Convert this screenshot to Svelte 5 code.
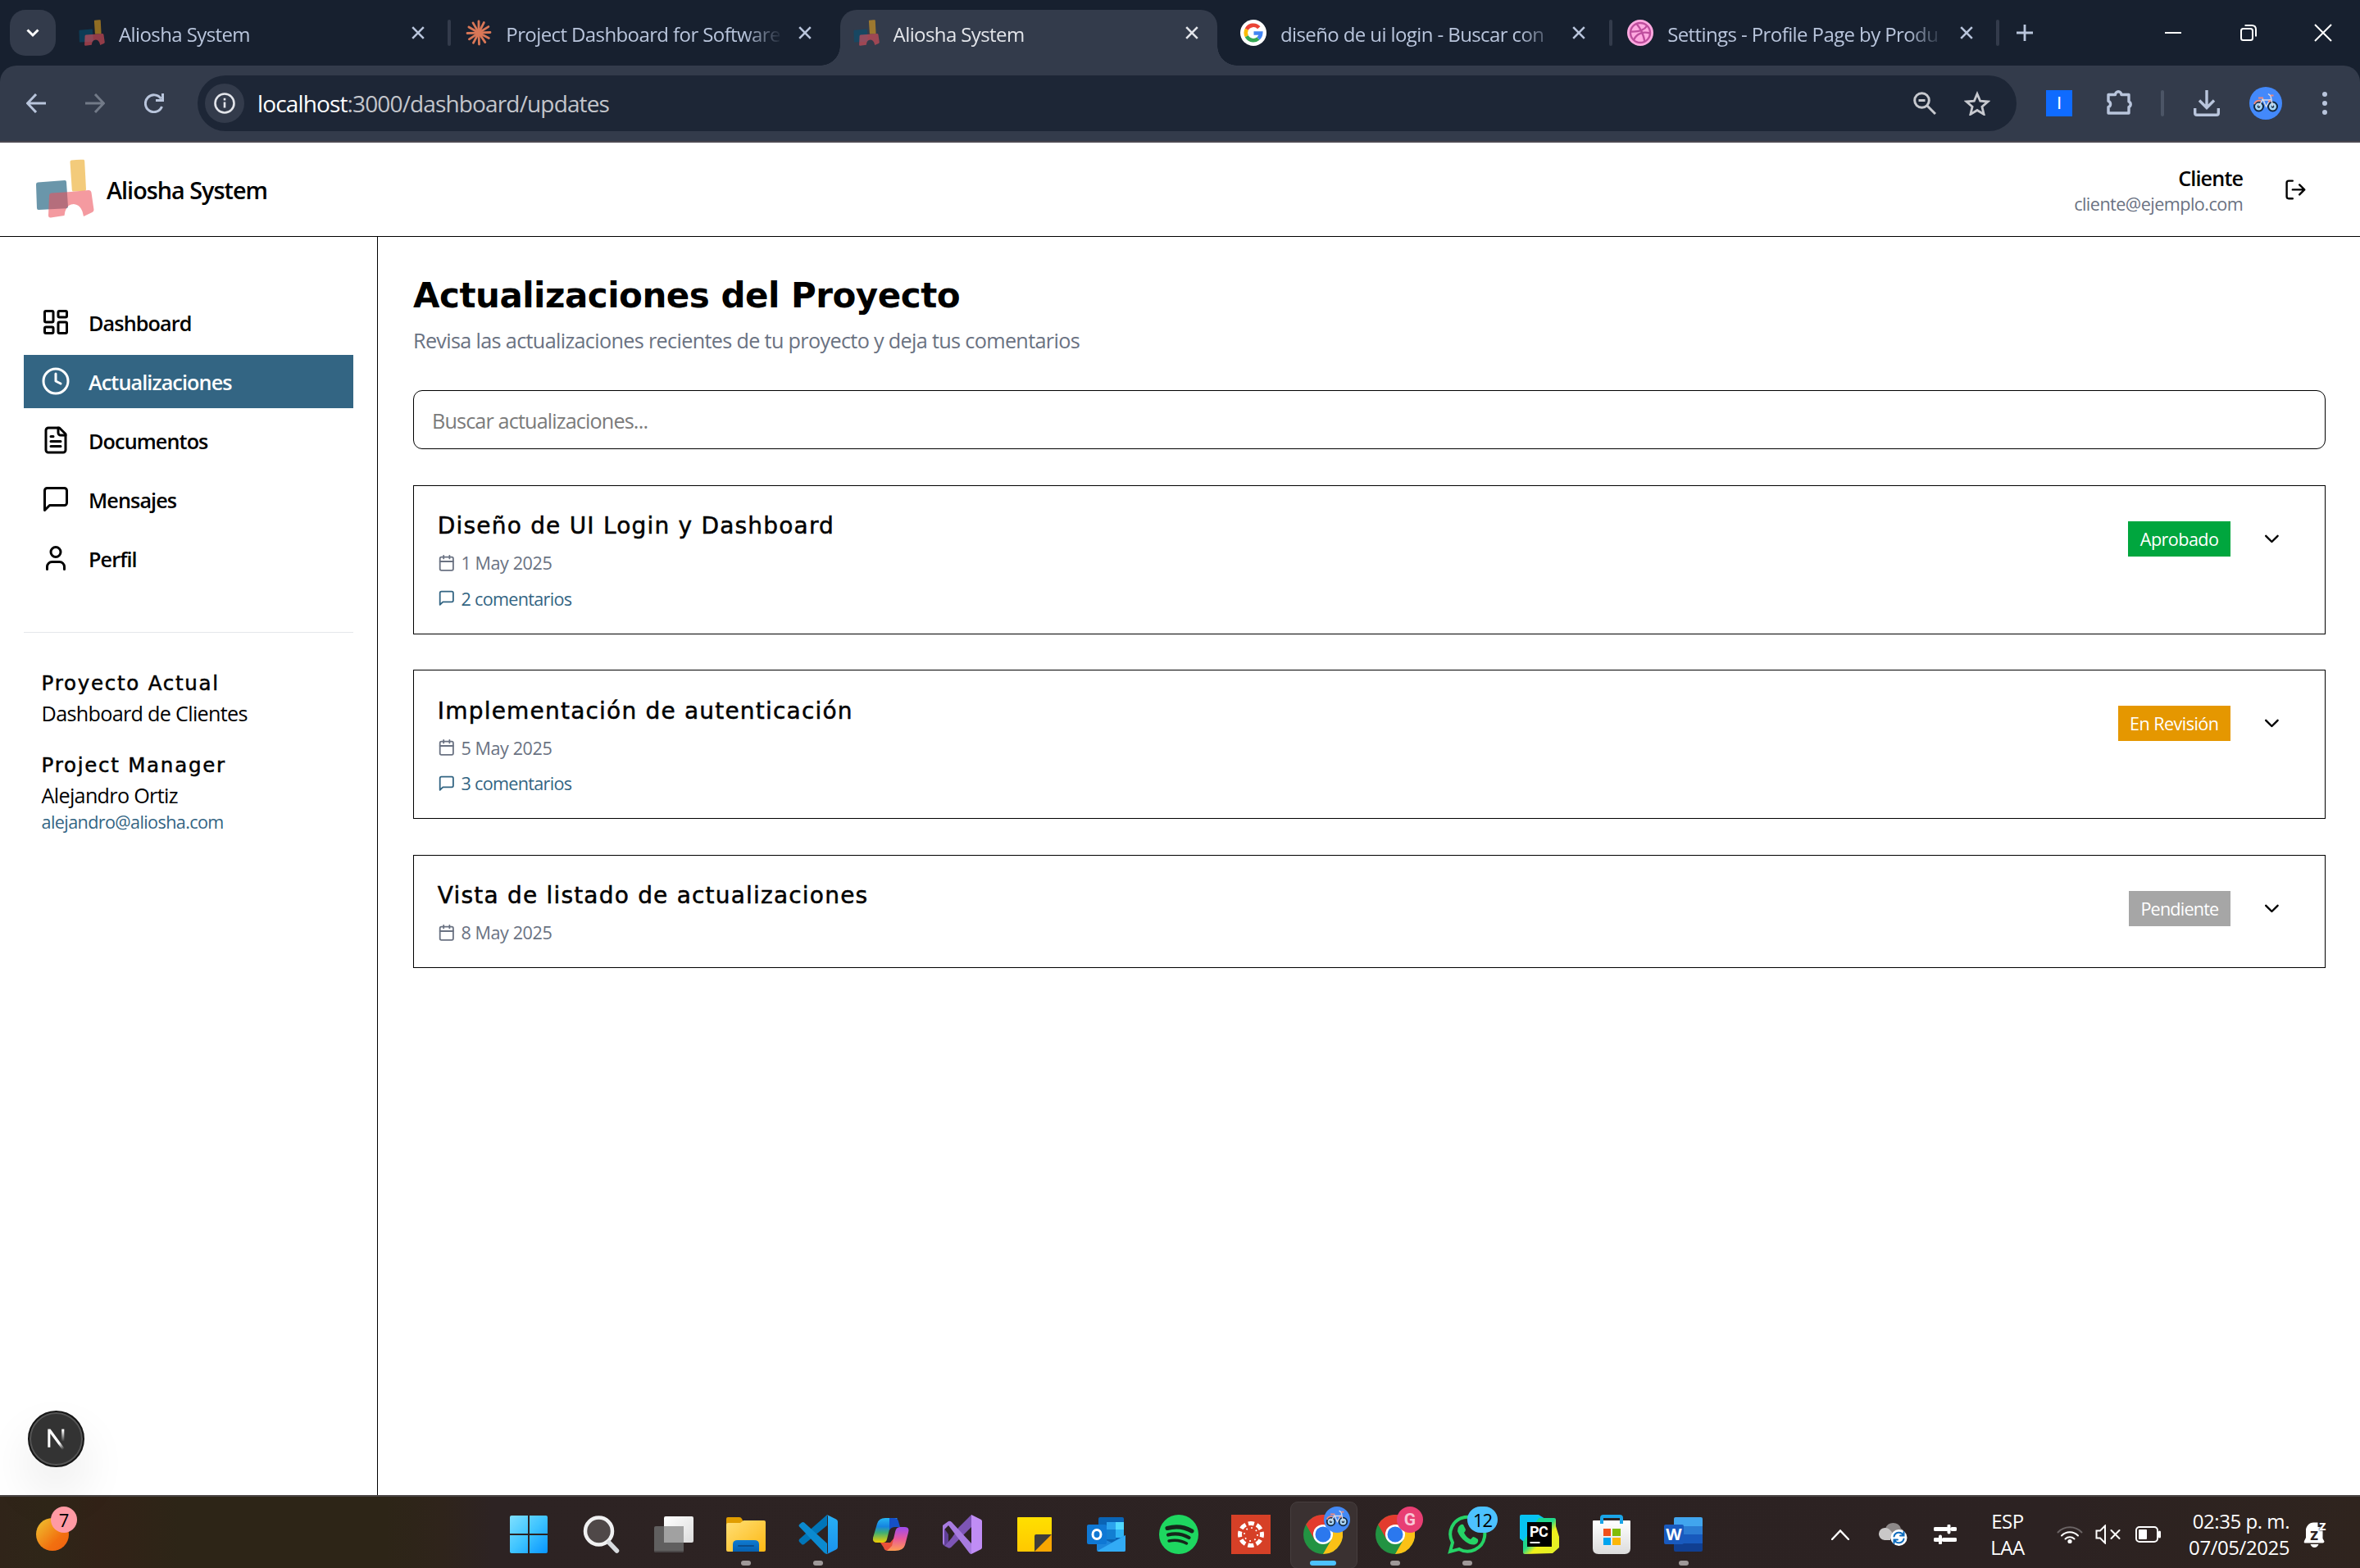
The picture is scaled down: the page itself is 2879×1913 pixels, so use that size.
<script lang="ts">
  const tabs = [
    { title: 'Aliosha System', icon: 'aliosha', active: false, sep: true },
    { title: 'Project Dashboard for Software', icon: 'claude', active: false, sep: false },
    { title: 'Aliosha System', icon: 'aliosha', active: true, sep: false },
    { title: 'diseño de ui login - Buscar con', icon: 'google', active: false, sep: true },
    { title: 'Settings - Profile Page by Produ', icon: 'dribbble', active: false, sep: true }
  ];

  const nav = [
    { label: 'Dashboard', icon: 'grid', active: false },
    { label: 'Actualizaciones', icon: 'clock', active: true },
    { label: 'Documentos', icon: 'file', active: false },
    { label: 'Mensajes', icon: 'message', active: false },
    { label: 'Perfil', icon: 'user', active: false }
  ];

  const updates = [
    { title: 'Diseño de UI Login y Dashboard', date: '1 May 2025', comments: 2, status: 'Aprobado', tone: 'green' },
    { title: 'Implementación de autenticación', date: '5 May 2025', comments: 3, status: 'En Revisión', tone: 'amber' },
    { title: 'Vista de listado de actualizaciones', date: '8 May 2025', comments: 0, status: 'Pendiente', tone: 'gray' }
  ];

  const apps = [
    { id: 'search' }, { id: 'taskview' }, { id: 'explorer', dot: true }, { id: 'vscode', dot: true },
    { id: 'copilot' }, { id: 'vstudio' }, { id: 'sticky' }, { id: 'outlook' }, { id: 'spotify' },
    { id: 'canvas' }, { id: 'chrome', active: true, badge: 'bike' }, { id: 'chrome', dot: true, badge: 'G' },
    { id: 'whatsapp', dot: true, badge: '12' }, { id: 'pycharm' }, { id: 'store' }, { id: 'word', dot: true }
  ];

  const rays = [0, 27, 58, 88, 118, 146, 178, 208, 236, 268, 300, 330];
</script>

{#snippet aliosha()}
  <svg class="logo" viewBox="0 0 72 72">
    <path fill="#075072" fill-opacity=".6" d="M3 28.500 36 26q2 0 2 2l2 30q0 2-2 2.200L4 62q-2 0-2-2L1 31q0-2.300 2-2.500z" />
    <path fill="#eaa51b" fill-opacity=".58" d="M44 1.500Q52 .5 59 .8q1 0 1.200 2L62 37q0 1.500-1.500 1.700l-14 .8q-1.500 0-1.700-1.500L42.500 3.500q0-1.500 1.500-2z" />
    <path fill="#ec515b" fill-opacity=".58" d="M20 41.500Q45 40 65 38q3 0 3.500 3L71.500 62q0 2-2 3L59 70q-2-14-12-15-10 0-11.500 14L19 71.500q-3 .3-3-2.500l1-24q.2-3.300 3-3.500z" />
  </svg>
{/snippet}

{#snippet bike()}
  <svg class="bike" viewBox="0 0 32 32">
    <g fill="none" stroke-width="2">
      <circle cx="7.500" cy="20" r="5.500" fill="#a9d5f5" stroke="#122840" />
      <circle cx="24.500" cy="20" r="5.500" fill="#a9d5f5" stroke="#122840" />
      <circle cx="7.500" cy="20" r="1.800" fill="#122840" />
      <circle cx="24.500" cy="20" r="1.800" fill="#122840" />
      <path stroke="#d9dbe6" stroke-width="1.500" d="m7.500 20 5-9 4 9 5-9M11 12h11M19 4.500l3 2.500 2.500 13" />
      <path stroke="#f08a7c" d="M2 17q2-5 8-4M19 14l3-1M7 9.500h6M22 6.500h3.500" />
    </g>
  </svg>
{/snippet}

{#snippet favicon(name: string)}
  {#if name === 'aliosha'}
    {@render aliosha()}
  {:else if name === 'claude'}
    <svg viewBox="0 0 32 32">
      <g stroke="#d97757" stroke-width="2.800" stroke-linecap="round">
        {#each rays as a}
          <path d="M16 15V2" transform="rotate({a} 16 16)" />
        {/each}
      </g>
      <circle cx="16" cy="16" r="3.500" fill="#d97757" />
    </svg>
  {:else if name === 'google'}
    <svg viewBox="0 0 32 32">
      <circle cx="16" cy="16" r="16" fill="#fff" />
      <g fill="none" stroke-width="4.600">
        <path stroke="#ea4335" d="M7.800 11.800A9.200 9.200 0 0 1 22.800 9.800" />
        <path stroke="#fbbc05" d="M7.800 20.200a9.200 9.200 0 0 1 0-8.400" />
        <path stroke="#34a853" d="M22 23A9.200 9.200 0 0 1 7.800 20.200" />
        <path stroke="#4285f4" d="M16.500 16.500h8.700A9.200 9.200 0 0 1 22 23" />
      </g>
    </svg>
  {:else}
    <svg viewBox="0 0 32 32">
      <circle cx="16" cy="16" r="16" fill="#ffa9e0" />
      <g fill="none" stroke="#bf4f9e" stroke-width="2.400">
        <circle cx="16" cy="16" r="12" />
        <path d="M4 14.500c9 .5 17-1.500 20.500-7.500M11.500 5c5 6 8.500 13 10 22M8 25c3-8 11-11 20-8.500" />
      </g>
    </svg>
  {/if}
{/snippet}

{#snippet cross()}
  <svg class="cross" viewBox="0 0 16 16"><path d="m1.200 1.200 13.600 13.600M14.800 1.200 1.200 14.800" /></svg>
{/snippet}

{#snippet line(name: string)}
  <svg class="line" viewBox="0 0 24 24">
    {#if name === 'grid'}
      <rect x="3" y="3" width="7" height="9" rx="1" /><rect x="14" y="3" width="7" height="5" rx="1" />
      <rect x="14" y="12" width="7" height="9" rx="1" /><rect x="3" y="16" width="7" height="5" rx="1" />
    {:else if name === 'clock'}
      <circle cx="12" cy="12" r="10" /><path d="M12 6v6l4 2" />
    {:else if name === 'file'}
      <path d="M15 2H6a2 2 0 0 0-2 2v16a2 2 0 0 0 2 2h12a2 2 0 0 0 2-2V7z" /><path d="M14 2v4a2 2 0 0 0 2 2h4M10 9H8M16 13H8M16 17H8" />
    {:else if name === 'message'}
      <path d="M21 15a2 2 0 0 1-2 2H7l-4 4V5a2 2 0 0 1 2-2h14a2 2 0 0 1 2 2z" />
    {:else if name === 'user'}
      <path d="M19 21v-2a4 4 0 0 0-4-4H9a4 4 0 0 0-4 4v2" /><circle cx="12" cy="7" r="4" />
    {:else if name === 'calendar'}
      <path d="M8 2v4M16 2v4M3 10h18" /><rect x="3" y="4" width="18" height="18" rx="2" />
    {:else if name === 'logout'}
      <path d="M9 21H5a2 2 0 0 1-2-2V5a2 2 0 0 1 2-2h4M16 17l5-5-5-5M21 12H9" />
    {:else}
      <path d="m6 9 6 6 6-6" />
    {/if}
  </svg>
{/snippet}

{#snippet app(id: string)}
  <svg class="app-icon" viewBox="0 0 48 48">
    {#if id === 'search'}
      <circle cx="20.500" cy="20" r="16.500" fill="#4f4848" stroke="#f1f1f2" stroke-width="4.500" />
      <path stroke="#d8dbdf" stroke-width="5.500" stroke-linecap="round" d="m33 34 9.500 10" />
    {:else if id === 'taskview'}
      <rect x="12" y="2" width="36" height="32" rx="2" fill="url(#tv)" />
      <rect x="0" y="14" width="36" height="32" rx="2" fill="#666" fill-opacity=".9" />
      <rect x="12" y="14" width="24" height="20" fill="#a1a1a1" />
      <path fill="#4b4849" d="M0 44h36q0 2-2 2H2q-2 0-2-2z" />
    {:else if id === 'explorer'}
      <path fill="#e09d00" d="M0 5q0-2 2-2h14q2 0 3 2l2 4v6H0z" />
      <path fill="url(#folder)" d="M0 12q0-2 2-2h15l4-3h25q2 0 2 2v34q0 2-2 2H2q-2 0-2-2z" />
      <path fill="url(#tray)" d="M8 45V36q0-5 6-5h20q6 0 6 5v9z" />
      <path stroke="#0b4d8c" stroke-width="2" stroke-linecap="round" d="M15 38h18" />
    {:else if id === 'vscode'}
      <path fill="#0075b8" d="M35 0v13L7 36q-2 1-3 0l-3-3q-1-1.500 0-3z" />
      <path fill="#0b8ad0" d="M1 14.500q-1-1 0-2.500l3-2.500q1.500-1 3 0L35 35v13q-2 0-4-2z" />
      <path fill="url(#vsc)" d="M35 0l11 5.500q2 1 2 3v31q0 2-2 3L35 48q1-1 1-3V3q0-2-1-3z" />
    {:else if id === 'copilot'}
      <path fill="url(#cop1)" d="M18 4h15l-8 6-5 20q-1 4-5 4H8q-6 0-5-6l5-17q2-7 10-7z" />
      <path fill="#1550c8" d="M23 4h6q4 0 5 4l2 7h-6q-5 0-7 4z" />
      <path fill="#e8503a" d="M12 34h12l5-6-4 16h-4q-4 0-5-4z" />
      <path fill="url(#cop2)" d="M30 44H20l6-6 4-17q1-6 6-6h6q6 0 4 7l-4 15q-2 7-12 7z" />
    {:else if id === 'vstudio'}
      <path fill="#5f3f96" d="M0 14l7 10v10l-5 4q-2-1-2-3z" />
      <path fill="#7d55b5" d="M35 0v15L10 40q-2 1-3 .5L2 38q10-9 17-22z" />
      <path fill="#a77be0" d="M0 13l7-5q2-1 4 1l24 26v13q-2 0-3-2L7 13l-5 5v19q-2-1-2-3z" />
      <path fill="#c08df5" d="M35 0l12 6q1 1 1 2v32q0 1-1 2l-12 6z" />
    {:else if id === 'sticky'}
      <path fill="url(#note)" d="M3 4q0-1 1-1h40q1 0 1 1v20L24 45H4q-1 0-1-1z" />
      <path fill="#403d3a" d="M24 26q0-2 2-2h19L24 45z" /><path fill="#f9a602" d="M45 24v20q0 1-1 1H24z" />
    {:else if id === 'outlook'}
      <rect x="14" y="3" width="31" height="32" rx="2" fill="#0a64b5" />
      <path fill="#2ba3ee" d="M24 9h11v9H24z" /><path fill="#50d9ff" d="M35 9h10v9H35z" />
      <path fill="#127fd2" d="M24 18h11v12H24z" /><path fill="#2fb4f5" d="M35 18h10v10H35z" />
      <path fill="#1c86dc" d="m12 26 18 8 17-9v18q0 2-2 2H14q-2 0-2-2z" /><path fill="#32abf5" d="m47 25-34 19q1 1 2 1h30q2 0 2-2z" />
      <rect x="0" y="12" width="24" height="24" rx="2" fill="#0f78d4" />
      <ellipse cx="12" cy="24" rx="5" ry="5.500" fill="none" stroke="#fff" stroke-width="3" />
    {:else if id === 'spotify'}
      <circle cx="24" cy="24" r="24" fill="#1ed760" />
      <g fill="none" stroke="#16261b" stroke-linecap="round">
        <path stroke-width="5" d="M10 16.500q16-4.500 30 3.500" /><path stroke-width="4.200" d="M11 24.500q13.500-3.500 25.500 3.500" />
        <path stroke-width="3.500" d="M12 32q11.500-2.500 21.500 3" />
      </g>
    {:else if id === 'canvas'}
      <path fill="#d64027" d="M0 0h48v48H0z" />
      <g fill="none" stroke="#fff">
        <circle cx="24" cy="24" r="13.500" stroke-width="5" stroke-dasharray="7.200 3.400" stroke-dashoffset="3.600" />
        <circle cx="24" cy="24" r="8" stroke-width="1.800" stroke-dasharray="1.800 4.480" />
      </g>
    {:else if id === 'chrome'}
      <circle cx="24" cy="24" r="24" fill="#229342" />
      <path fill="#e33b2e" d="M3.200 12A24 24 0 0 1 44.800 12H24l-10.500 18z" />
      <path fill="#fbc116" d="M44.800 12A24 24 0 0 1 24 48l10.400-18L24 12z" />
      <circle cx="24" cy="24" r="12" fill="#fff" /><circle cx="24" cy="24" r="9.500" fill="#2b78ee" />
    {:else if id === 'whatsapp'}
      <path fill="none" stroke="#25d366" stroke-width="4" d="m3 45 3-11A21 21 0 1 1 14 42z" />
      <path fill="#25d366" d="M15 13q2-2 4-1l3 6q0 2-2 4 3 6 8 8l3-3q2 0 6 3 1 4-3 6-5 2-12-3T12 20q0-5 3-7z" />
    {:else if id === 'pycharm'}
      <path fill="#07c3f2" d="M2 0h21l8 5-9 29H6l-6-5V2q0-2 2-2z" />
      <path fill="url(#pcm)" d="M23 4h19q2 0 2 2v8l4 13v13l-8 7-34 1q-2 0-2-2V33z" />
      <path fill="#000" d="M9 9h30v30H9z" /><path fill="#fff" d="M12.500 33h12v2h-12z" />
    {:else if id === 'store'}
      <path fill="url(#bag)" d="M1 8q0-1 1-1h44q1 0 1 1v33q0 7-7 7H8q-7 0-7-7z" />
      <path fill="none" stroke="#1aa5e8" stroke-width="4" d="M12 11V4q0-2 2-2h20q2 0 2 2v7" />
      <path fill="#f1511b" d="M14 17h9v9h-9z" /><path fill="#80bc06" d="M25 17h10v9H25z" />
      <path fill="#00a4ef" d="M14 28h9v9h-9z" /><path fill="#fbb706" d="M25 28h10v9H25z" />
    {:else if id === 'word'}
      <path fill="#41a5ee" d="M12 5q0-2 2-2h31q2 0 2 2v9H12z" /><path fill="#2b7cd3" d="M12 14h35v10H12z" />
      <path fill="#185abd" d="M12 24h35v11H12z" /><path fill="#103f91" d="M12 35h35v8q0 2-2 2H14q-2 0-2-2z" />
      <rect x="0" y="12" width="24" height="24" rx="2" fill="#195abe" />
    {/if}
  </svg>
  {#if id === 'word'}<span class="word-w">W</span>{/if}
  {#if id === 'pycharm'}<span class="pc">PC</span>{/if}
{/snippet}

<svg class="defs" width="0" height="0">
  <defs>
    <linearGradient id="win" x2="1" y2="1"><stop stop-color="#7fe0ff" /><stop offset=".5" stop-color="#3fc4ff" /><stop offset="1" stop-color="#0795ff" /></linearGradient>
    <linearGradient id="tv" x2="1" y2="1"><stop stop-color="#fff" /><stop offset="1" stop-color="#dcdcdc" /></linearGradient>
    <linearGradient id="folder" x2="1" y2="1"><stop stop-color="#ffdf76" /><stop offset="1" stop-color="#fdb813" /></linearGradient>
    <linearGradient id="tray" x2="0" y2="1"><stop stop-color="#0f7bd2" /><stop offset="1" stop-color="#0660b0" /></linearGradient>
    <linearGradient id="vsc" x2="0" y2="1"><stop stop-color="#28b0f5" /><stop offset="1" stop-color="#1a92ec" /></linearGradient>
    <linearGradient id="cop1" x2="0" y2="1"><stop stop-color="#25b5f2" /><stop offset=".35" stop-color="#1584e0" /><stop offset=".6" stop-color="#3fae73" /><stop offset="1" stop-color="#f4d000" /></linearGradient>
    <linearGradient id="cop2" x2="0" y2="1"><stop stop-color="#9c4bf0" /><stop offset=".5" stop-color="#e9599a" /><stop offset="1" stop-color="#ff9d52" /></linearGradient>
    <linearGradient id="note" x2="0" y2="1"><stop stop-color="#ffe000" /><stop offset="1" stop-color="#ffc800" /></linearGradient>
    <linearGradient id="pcm" x2="1" y2="1"><stop stop-color="#12d39a" /><stop offset=".45" stop-color="#21d789" /><stop offset=".6" stop-color="#f0f01a" /><stop offset="1" stop-color="#e0f02a" /></linearGradient>
    <linearGradient id="bag" x2="0" y2="1"><stop stop-color="#fff" /><stop offset="1" stop-color="#dcdcdc" /></linearGradient>
    <linearGradient id="nx1" x1="12" y1="12" x2="27" y2="32" gradientUnits="userSpaceOnUse"><stop offset=".6" stop-color="#fff" /><stop offset="1" stop-color="#fff" stop-opacity="0" /></linearGradient>
    <linearGradient id="nx2" x1="0" y1="0" x2="0" y2="1"><stop offset=".1" stop-color="#fff" /><stop offset="1" stop-color="#fff" stop-opacity="0" /></linearGradient>
  </defs>
</svg>

<div class="screen">
  <header class="tabstrip">
    <button class="tab-search" aria-label="Buscar pestañas">
      <svg viewBox="0 0 16 16"><path d="m1.500 4.500 6.500 6.500 6.500-6.500" /></svg>
    </button>
    <div class="tabs">
      {#each tabs as t}
        <div class="tab" class:active={t.active}>
          <span class="favicon">{@render favicon(t.icon)}</span>
          <span class="tab-title">{t.title}</span>
          {@render cross()}
        </div>
        <span class="tab-sep" class:shown={t.sep}></span>
      {/each}
    </div>
    <svg class="plus" viewBox="0 0 20 20"><path d="M10 0v20M0 10h20" /></svg>
    <div class="window-controls">
      <svg viewBox="0 0 20 20"><path d="M0 10h20" /></svg>
      <svg viewBox="0 0 20 20"><rect x="1" y="5" width="14" height="14" rx="2.500" /><path d="M5.500 1H14q5 0 5 5v8.500" /></svg>
      <svg viewBox="0 0 20 20"><path d="m0 0 20 20M20 0 0 20" /></svg>
    </div>
  </header>

  <div class="toolbar-wrap">
    <div class="toolbar">
      <div class="history">
        <svg viewBox="0 0 24 24"><path d="M24 12H2M12 1 1.500 12 12 23" /></svg>
        <svg class="dim" viewBox="0 0 24 24"><path d="M0 12h22M12 1l10.500 11L12 23" /></svg>
        <svg viewBox="0 0 24 24"><path d="M21.500 16A10.400 10.400 0 1 1 20.500 6.500M22.500 0v8.500H14" /></svg>
      </div>
      <div class="omnibox">
        <span class="info"><svg viewBox="0 0 26 26"><circle cx="13" cy="13" r="11.500" /><path d="M13 11.500v7M13 6.800v2.600" /></svg></span>
        <span class="url"><b>localhost</b>:3000/dashboard/updates</span>
        <svg class="lens" viewBox="0 0 28 28"><circle cx="10.500" cy="10.500" r="8.800" /><path d="m17 17 10 10M6.500 10.500h8" /></svg>
        <svg class="star" viewBox="0 0 32 30"><path d="m16 3.500 3.700 8.700 9.300.8-7.100 6.200 2.200 9.200-8.100-4.900-8.100 4.900 2.200-9.200L3 13l9.300-.8z" /></svg>
      </div>
      <span class="ext">I</span>
      <svg class="puzzle" viewBox="0 0 32 32"><path d="M2 7.500h8.500a3.700 3.700 0 0 1 7.400 0H27v8.500a3.500 3.500 0 0 1 0 6.500V30H2v-7.500a3.800 3.800 0 0 0 0-7.200z" /></svg>
      <span class="bar-sep"></span>
      <svg class="download" viewBox="0 0 32 32"><path d="M16 0v21M7 12.500l9 9 9-9M1.700 22v6q0 2.300 2.300 2.300h24q2.300 0 2.300-2.300v-6" /></svg>
      <span class="avatar">{@render bike()}</span>
      <svg class="dots" viewBox="0 0 6 28"><circle cx="3" cy="3" r="3" /><circle cx="3" cy="14" r="3" /><circle cx="3" cy="25" r="3" /></svg>
    </div>
  </div>

  <div class="page">
    <header class="page-header">
      <div class="brand">{@render aliosha()}<span>Aliosha System</span></div>
      <div class="account">
        <div class="who"><strong>Cliente</strong><span>cliente@ejemplo.com</span></div>
        {@render line('logout')}
      </div>
    </header>
    <div class="body">
      <aside>
        <nav>
          {#each nav as n}
            <a href="#{n.icon}" class:active={n.active}>{@render line(n.icon)}<span>{n.label}</span></a>
          {/each}
        </nav>
        <section class="project">
          <div><h3>Proyecto Actual</h3><p>Dashboard de Clientes</p></div>
          <div><h3>Project Manager</h3><p>Alejandro Ortiz</p><p class="mail">alejandro@aliosha.com</p></div>
        </section>
        <button class="next" aria-label="Next.js">
          <svg viewBox="0 0 36 36"><path fill="url(#nx1)" d="M6 4h3.600l20.500 28-2.800 2.300L9.400 10v19H6z" /><path fill="url(#nx2)" d="M25 4h3.500v17H25z" /></svg>
        </button>
      </aside>
      <main>
        <h1>Actualizaciones del Proyecto</h1>
        <p class="lead">Revisa las actualizaciones recientes de tu proyecto y deja tus comentarios</p>
        <input placeholder="Buscar actualizaciones..." />
        <div class="cards">
          {#each updates as u}
            <article>
              <div class="info-col">
                <h2>{u.title}</h2>
                <div class="meta">{@render line('calendar')}<span>{u.date}</span></div>
                {#if u.comments}
                  <div class="meta comments">{@render line('message')}<span>{u.comments} comentarios</span></div>
                {/if}
              </div>
              <div class="actions">
                <span class="badge {u.tone}">{u.status}</span>
                <button class="expand" aria-label="Expandir">{@render line('chevron')}</button>
              </div>
            </article>
          {/each}
        </div>
      </main>
    </div>
  </div>

  <footer class="taskbar">
    <div class="weather"><span class="sun"></span><span class="count">7</span></div>
    <div class="apps">
      <span class="app start">
        <svg class="app-icon" viewBox="0 0 48 48">
          <path fill="url(#win)" d="M3 1h20v22H1V3q0-2 2-2zM25 1h20q2 0 2 2v20H25zM1 25h22v22H3q-2 0-2-2zM25 25h22v20q0 2-2 2H25z" />
        </svg>
      </span>
      {#each apps as a}
        <span class="app" class:current={a.active}>
          {@render app(a.id)}
          {#if a.badge === 'bike'}
            <span class="app-badge blue">{@render bike()}</span>
          {:else if a.badge === 'G'}
            <span class="app-badge pink">G</span>
          {:else if a.badge}
            <span class="app-badge sky">{a.badge}</span>
          {/if}
          {#if a.dot || a.active}<i class="run"></i>{/if}
        </span>
      {/each}
    </div>
    <div class="tray">
      <svg class="t-chev" viewBox="0 0 22 14"><path d="M1 13 11 2.500 21 13" /></svg>
      <svg class="t-cloud" viewBox="0 0 36 30">
        <path fill="#8d8888" d="M8 8a10 10 0 0 1 19 0q3 1 4 5L9 20z" />
        <path fill="#c9c7c7" d="M7 22a7.500 7.500 0 0 1 1-15q5 0 9 7l-3 8z" />
        <circle cx="24.500" cy="19" r="10" fill="#fff" />
        <path fill="none" stroke="#0f6cbd" stroke-width="2" d="M18.500 17.500a6.200 6.200 0 0 1 11.500-1.500M30.500 12v4.500H26M30.500 20.500a6.200 6.200 0 0 1-11.500 1.500M18.500 26v-4.500H23" />
      </svg>
      <svg class="t-slide" viewBox="0 0 28 24"><path d="M2 5.500h14M22.500 5.500H26M2 18.500h3.500M12 18.500h14" stroke-width="5" /><path d="M18.500 1.500v8M8 14.500v8" stroke-width="4" /></svg>
      <div class="lang"><span>ESP</span><span>LAA</span></div>
      <svg class="t-wifi" viewBox="0 0 32 24">
        <path stroke="#6b6465" d="M1.500 9.500a20 20 0 0 1 29 0" /><path d="M6 13.500a14 14 0 0 1 20 0M10.500 17.500a8 8 0 0 1 11 0" /><circle cx="16" cy="20.500" r="2.600" fill="#fff" stroke="none" />
      </svg>
      <svg class="t-vol" viewBox="0 0 32 24"><path d="M1.500 7.500h4.500L12 1.500v21l-6-6H1.500zM19.500 7l10 10M29.500 7l-10 10" /></svg>
      <svg class="t-bat" viewBox="0 0 32 20"><rect x="1" y="1" width="26" height="18" rx="4" /><rect x="4" y="4" width="10" height="12" rx="1" fill="#fff" stroke="none" /><path stroke-width="3" d="M29.500 7v6" /></svg>
      <div class="clock"><span>02:35 p. m.</span><span>07/05/2025</span></div>
      <div class="bell">
        <svg viewBox="0 0 28 32"><path fill="#fff" d="M3 12a9.500 9.500 0 0 1 9.500-10.500h5V7h6v14l2 3.500q0 2-2 2h-22Q0 26 1 24l2-4zM8.500 28h10q-1.500 4-5 4t-5-4z" /></svg>
        <span class="z1">z</span><span class="z2">z</span>
      </div>
    </div>
  </footer>
</div>

<style>
  :global(body) { margin: 0; }
  .defs { position: absolute; }
  .screen {
    width: 2879px; height: 1913px; display: flex; flex-direction: column; overflow: hidden;
    font-family: "Open Sans", "Noto Sans", sans-serif; color: #000; background: #fff;
  }
  .screen * { box-sizing: border-box; }
  svg { display: block; flex: none; }
  button { border: 0; padding: 0; background: none; display: grid; place-items: center; }
  h1, h2, h3, p { margin: 0; }
  .logo { width: 100%; height: 100%; }

  /* tab strip */
  .tabstrip { height: 80px; flex: none; background: #17202f; display: flex; padding-left: 12px; color: #b9c5dc; }
  .tab-search { width: 56px; height: 56px; margin-top: 12px; border-radius: 19px; background: #333b4b; }
  .tab-search svg { width: 16px; height: 16px; fill: none; stroke: #fff; stroke-width: 3; }
  .tabs { display: flex; margin-left: 12px; }
  .tab { position: relative; width: 460px; height: 68px; margin-top: 12px; padding: 0 22.500px 12px 16px; display: flex; align-items: center; border-radius: 20px 20px 0 0; }
  .tab.active { background: #333b4b; color: #e3e5ea; }
  .tab.active::before, .tab.active::after { content: ""; position: absolute; bottom: 0; width: 24px; height: 24px; }
  .tab.active::before { right: 100%; background: radial-gradient(circle at 0 0, transparent 23.500px, #333b4b 24px); }
  .tab.active::after { left: 100%; background: radial-gradient(circle at 100% 0, transparent 23.500px, #333b4b 24px); }
  .favicon { width: 32px; height: 32px; flex: none; }
  .favicon svg { width: 32px; height: 32px; }
  .tab-title {
    margin: 3px 21px 0 17px; flex: 1; min-width: 0; overflow: hidden; white-space: nowrap; font-size: 24px; line-height: 36px; letter-spacing: -.6px;
    mask-image: linear-gradient(90deg, #000 292px, transparent 338px);
  }
  .cross { width: 16px; height: 16px; stroke: currentColor; stroke-width: 2.600; }
  .tab-sep { width: 4px; height: 32px; margin: 24px 2.300px 0 6px; border-radius: 2px; }
  .tab-sep.shown { background: #333b4b; }
  .plus { width: 20px; height: 20px; margin: 30px 0 0 19px; stroke: currentColor; stroke-width: 2.800; }
  .window-controls { margin-left: auto; padding-right: 35px; display: flex; align-items: center; gap: 71.500px; }
  .window-controls svg { width: 20px; height: 20px; fill: none; stroke: #fff; stroke-width: 2; overflow: visible; }

  /* toolbar */
  .toolbar-wrap { height: 94px; flex: none; background: #17202f; }
  .toolbar { height: 94px; padding: 0 40px 0 32px; display: flex; align-items: center; background: #333b4b; border-bottom: 2px solid #4a4750; border-radius: 20px 20px 0 0; color: #b9c5dc; }
  .history { display: flex; gap: 48px; }
  .history svg { width: 24px; height: 24px; fill: none; stroke: currentColor; stroke-width: 3; }
  .history .dim { color: #727a88; }
  .omnibox { width: 2219px; height: 68px; margin-left: 41px; padding: 0 32px 0 9px; display: flex; align-items: center; border-radius: 34px; background: #1d2636; }
  .info { width: 48px; height: 48px; border-radius: 50%; background: #333b4b; display: grid; place-items: center; }
  .info svg { width: 26px; height: 26px; fill: none; stroke: #e3e5ea; stroke-width: 2.600; }
  .url { margin: 0 auto 0 16px; font-size: 28px; line-height: 40px; letter-spacing: -.86px; color: #c3c5cb; }
  .url b { font-weight: 400; color: #fff; }
  .lens { width: 28px; height: 28px; margin-right: 34px; fill: none; stroke: #c7c9cf; stroke-width: 3; }
  .star { width: 32px; height: 30px; fill: none; stroke: #c7c9cf; stroke-width: 2.800; }
  .ext { width: 32px; height: 32px; margin-left: 36px; background: #0f6bff; color: #fff; text-align: center; font: 22px/32px "Liberation Sans", sans-serif; }
  .puzzle { width: 32px; height: 32px; margin: -4px 0 0 42px; fill: none; stroke: currentColor; stroke-width: 3.400; stroke-linejoin: round; }
  .bar-sep { width: 4px; height: 32px; margin-left: 34px; border-radius: 2px; background: #4c5566; }
  .download { width: 32px; height: 32px; margin-left: 36px; fill: none; stroke: currentColor; stroke-width: 3.400; }
  .avatar { width: 40px; height: 40px; margin-left: 36px; border-radius: 50%; background: #4389fb; display: grid; place-items: center; }
  .avatar .bike { width: 32px; height: 32px; }
  .dots { width: 6px; height: 28px; margin-left: auto; fill: currentColor; }

  /* page */
  .page { flex: 1; min-height: 0; display: flex; flex-direction: column; }
  .page-header { height: 115px; flex: none; border-bottom: 1px solid #000; display: flex; align-items: center; justify-content: space-between; padding: 0 64px 0 43px; }
  .brand { display: flex; align-items: center; gap: 15px; font-weight: 600; font-size: 28.800px; line-height: 50px; letter-spacing: -.99px; }
  .brand span { padding-top: 2px; }
  .brand .logo { width: 72px; height: 72px; margin-bottom: 2px; }
  .account { display: flex; align-items: center; gap: 50px; }
  .account .line { width: 28.800px; height: 28.800px; }
  .who { display: flex; flex-direction: column; align-items: flex-end; padding-top: 1px; }
  .who strong { font-weight: 600; font-size: 25.200px; line-height: 36px; letter-spacing: -.85px; }
  .who span { font-size: 21.600px; line-height: 28.800px; letter-spacing: -.53px; color: #6a7282; }
  .line { fill: none; stroke: currentColor; stroke-width: 2; stroke-linecap: round; stroke-linejoin: round; }
  .body { flex: 1; min-height: 0; display: flex; }
  aside { position: relative; width: 461px; flex: none; border-right: 1px solid #000; padding: 72px 29px 0; }
  nav { display: flex; flex-direction: column; gap: 7.200px; }
  nav a { height: 64.800px; padding-left: 21px; display: flex; align-items: center; gap: 22px; color: #000; text-decoration: none; font-weight: 600; font-size: 25.200px; line-height: 36px; letter-spacing: -.9px; }
  nav a.active { background: #336583; color: #fff; }
  nav span { padding-top: 1px; }
  nav .line { width: 36px; height: 36px; }
  .project { margin-top: 57px; border-top: 1px solid #e5e7eb; padding: 44px 0 0 21.600px; display: flex; flex-direction: column; gap: 28px; }
  h1, h2, h3 { font-family: "DejaVu Sans", sans-serif; white-space: nowrap; }
  h2, h3 { font-weight: 400; -webkit-text-stroke: .5px #000; }
  h3 { font-size: 24.500px; line-height: 36px; letter-spacing: 1.750px; }
  .project p { font-size: 25.200px; line-height: 36px; letter-spacing: -.7px; }
  .project .mail { padding-top: 1px; font-size: 21.600px; line-height: 28.800px; letter-spacing: -.62px; color: #336583; }
  .next { position: absolute; left: 34px; bottom: 34px; width: 69px; height: 69px; border-radius: 50%; background: #333; border: 2px solid #161616; box-shadow: inset 0 0 0 2px #555, 0 30px 60px rgba(0, 0, 0, .09); }
  .next svg { width: 32px; height: 32px; }

  main { flex: 1; min-width: 0; padding: 43px 42px 0 43px; }
  h1 { font-weight: 700; font-size: 42px; line-height: 57.600px; letter-spacing: -.5px; }
  .lead { margin-top: 7px; font-size: 25.200px; line-height: 36px; letter-spacing: -.66px; color: #6a7282; }
  input { display: block; width: 100%; height: 72px; margin-top: 43px; padding: 3px 22px 0; border: 1px solid #000; border-radius: 11px; background: none; font: 25.200px "Open Sans", sans-serif; letter-spacing: -.86px; }
  input::placeholder { color: #7b7b7b; opacity: 1; }
  .cards { margin-top: 44px; display: flex; flex-direction: column; gap: 43.500px; }
  article { border: 1px solid #000; padding: 28.800px 28.800px 28.200px; display: flex; justify-content: space-between; align-items: flex-start; }
  h2 { padding-top: 1px; font-size: 28px; line-height: 39.500px; letter-spacing: 1.200px; }
  .meta { display: flex; align-items: center; gap: 7px; margin-top: 10.500px; font-size: 21.600px; line-height: 28.800px; letter-spacing: -.42px; color: #6a7282; }
  .meta span { padding-top: 1px; margin-bottom: -1px; }
  .meta .line { width: 21.600px; height: 21.600px; }
  .comments { margin-top: 14.400px; color: #336583; letter-spacing: -.68px; }
  .actions { display: flex; align-items: center; gap: 14.400px; }
  .badge { height: 43px; padding: 0 14.400px; color: #fff; font-size: 21.600px; line-height: 44px; letter-spacing: -.56px; }
  .green { background: #00a63e; }
  .amber { background: #e59700; }
  .gray { background: #a6a6a6; letter-spacing: -.8px; }
  .expand { width: 72px; height: 72px; color: #000; }
  .expand .line { width: 28.800px; height: 28.800px; }

  /* taskbar */
  .taskbar { height: 89px; flex: none; display: flex; border-top: 2px solid #4b4645; background: linear-gradient(90deg, #302419 0, #2f2618 60px, #322217 120px, #2d2517 220px, #2d2517 470px, #2f241b 540px, #2d2323 600px, #2c2222 2500px, #2f241e 2879px); }
  .weather { position: relative; width: 600px; flex: none; padding: 26px 0 0 44px; }
  .sun { display: block; width: 40px; height: 40px; border-radius: 50%; background: linear-gradient(135deg, #efb92c 10%, #f2700f 65%, #f06010); }
  .count { position: absolute; left: 62px; top: 12px; width: 32px; height: 32px; border-radius: 50%; background: #ff9aa4; font-size: 22px; line-height: 32px; text-align: center; }
  .apps { display: flex; margin-right: auto; }
  .app { position: relative; width: 88px; height: 87px; padding-top: 5px; display: grid; place-items: center; }
  .app.start { width: 90px; }
  .app-icon { width: 48px; height: 48px; }
  .app.current::before { content: ""; position: absolute; left: 4px; top: 6px; width: 80px; height: 80px; border-radius: 9px; background: #3a3131; border: 1px solid #463e3e; }
  .app.current .app-icon { position: relative; }
  .run { position: absolute; left: 38px; bottom: 3px; width: 12px; height: 6px; border-radius: 3px; background: #9f9898; }
  .current .run { left: 28px; width: 32px; background: #4cc2ff; }
  .app-badge { position: absolute; left: 45px; top: 12px; width: 32px; height: 32px; border-radius: 50%; text-align: center; }
  .app-badge .bike { width: 28px; height: 28px; margin: 1px 2px; }
  .blue { background: #4389f5; }
  .pink { left: 46px; background: #e83e73; color: #f9c6d6; font: 700 21px/32px Roboto, sans-serif; }
  .sky { left: 44px; width: 37px; border-radius: 16px; background: #4cc2ff; color: #000; font-size: 22px; line-height: 32px; letter-spacing: -1px; }
  .word-w { position: absolute; left: 20px; top: 34px; width: 24px; text-align: center; color: #fff; font: 700 20px/24px "Open Sans", sans-serif; }
  .pc { position: absolute; left: 32px; top: 33px; color: #fff; font: 700 18px/20px Roboto, sans-serif; letter-spacing: -.5px; }
  .tray { width: 673px; flex: none; padding: 4px 41px 0 28px; display: flex; align-items: center; }
  .tray svg { fill: none; stroke: #fff; stroke-width: 2; stroke-linecap: round; }
  .t-chev { width: 22px; height: 14px; }
  .tray .t-chev { stroke-width: 2.400; }
  .t-cloud { width: 36px; height: 30px; margin-left: 36px; }
  .tray .t-cloud { stroke: none; }
  .t-slide { width: 28px; height: 24px; margin-left: 31px; }
  .lang, .clock { display: flex; flex-direction: column; color: #fff; font-size: 24px; line-height: 32px; letter-spacing: -.45px; }
  .lang { width: 44px; margin-left: 40px; align-items: center; }
  .t-wifi { width: 32px; height: 24px; margin-left: 38px; }
  .t-vol { width: 32px; height: 24px; margin-left: 15px; }
  .t-bat { width: 32px; height: 20px; margin-left: 17px; }
  .clock { margin-left: auto; align-items: flex-end; white-space: nowrap; }
  .bell { position: relative; width: 28px; height: 32px; margin-left: 17px; }
  .tray .bell svg { width: 28px; height: 32px; stroke: none; }
  .bell span { position: absolute; font-family: Roboto, sans-serif; font-weight: 700; line-height: 16px; }
  .z1 { left: 8px; top: 8px; font-size: 20px; color: #2c2222; }
  .z2 { left: 19px; top: -3px; font-size: 17px; color: #fff; text-shadow: 0 0 2px #2c2222, 0 0 2px #2c2222; }
</style>
